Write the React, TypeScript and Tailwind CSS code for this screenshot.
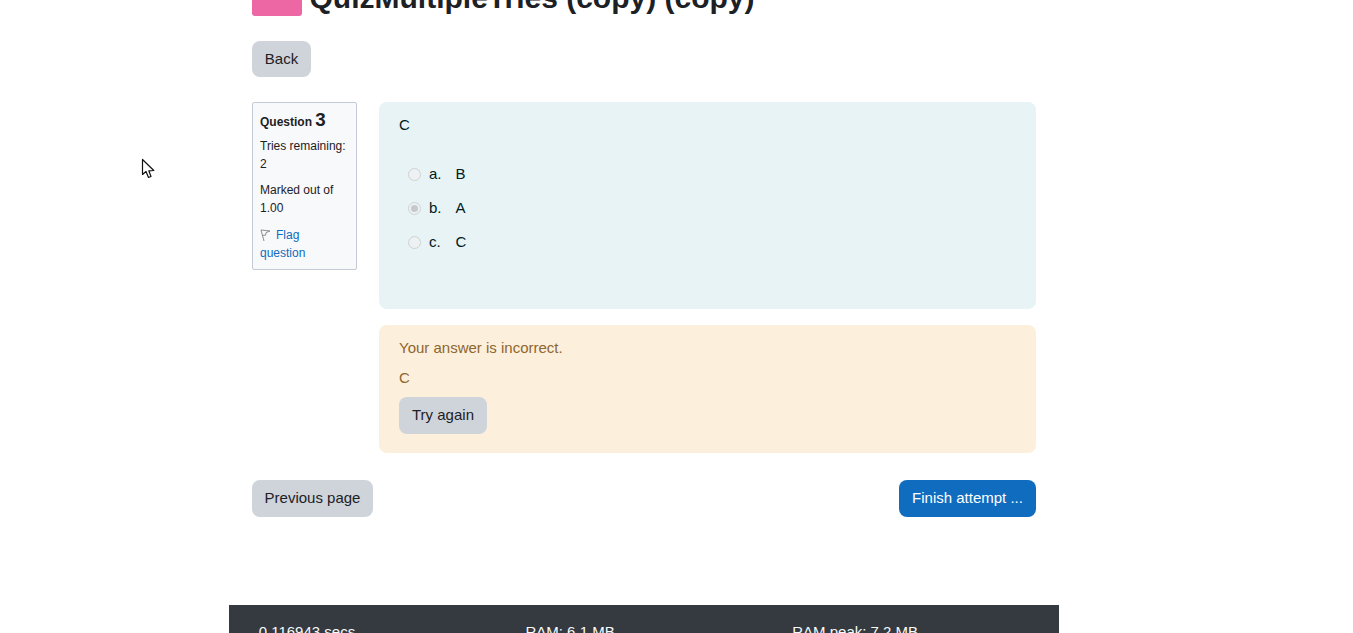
import React from 'react';

function Radio({ checked }: { checked?: boolean }) {
  return (
    <span className="flex h-[13px] w-[13px] shrink-0 items-center justify-center rounded-full border border-[#cfd2d4] bg-[#eef1f2]">
      {checked && <span className="h-[7px] w-[7px] rounded-full bg-[#c6c9cb]" />}
    </span>
  );
}

export default function App() {
  const options = [
    { letter: 'a.', text: 'B' },
    { letter: 'b.', text: 'A', checked: true },
    { letter: 'c.', text: 'C' },
  ];

  return (
    <div className="relative h-[633px] overflow-hidden bg-white font-['Liberation_Sans',Arial,sans-serif] text-[15px] text-[#1d2125]">
      {/* Mouse pointer from the capture */}
      <svg className="absolute left-[141px] top-[158px]" width="15" height="21" viewBox="0 0 15 21">
        <path
          d="M1.5 1.5 L1.5 16.5 L5 13.5 L7.5 19.5 L10 18.5 L7.8 12.8 L12.8 12.5 Z"
          fill="#fff"
          stroke="#111"
          strokeWidth="1.2"
          strokeLinejoin="round"
        />
      </svg>

      <div className="ml-[229px] w-[830px]">
        <main className="px-[23px]">
          {/* Title, scrolled off the top */}
          <div className="-mt-[24px] flex h-[40px] items-center gap-[7.5px]">
            <div className="h-[40px] w-[50px] rounded-[3px] bg-[#ee67a5]" />
            <h1 className="pt-[4px] text-[30px] font-bold leading-[40px] text-[#1d2125]">QuizMultipleTries (copy) (copy)</h1>
          </div>

          <div className="mt-[25px]">
            <button className="h-[36px] w-[59px] rounded-lg bg-[#ced4da] text-[15px] text-[#1d2125]">Back</button>
          </div>

          <div className="mt-[25px] flex items-start gap-[22px]">
            {/* Question info */}
            <div className="h-[168px] w-[105px] shrink-0 rounded-[2px] border border-[#c3cbd6] bg-[#f8f9fa] px-[7px] pt-[6px] text-[12px] leading-[18px]">
              <div className="font-bold leading-[22px]">
                Question <span className="text-[18.75px]">3</span>
              </div>
              <div className="mt-[4px]">Tries remaining: 2</div>
              <div className="mt-[8px]">Marked out of 1.00</div>
              <div className="mt-[9px] w-[80px] text-[#0f6cbf]">
                <svg className="mr-[5px] inline-block align-[-3px]" width="11" height="13" viewBox="0 0 11 13" fill="none">
                  <path d="M1 1 L4 12 M1 1 L10 2 L6 3.6 L5.6 6.2 L2.4 6.4" stroke="#8f8f8f" strokeWidth="1" />
                </svg>
                Flag question
              </div>
            </div>

            <div className="flex min-w-0 flex-1 flex-col gap-4">
              {/* Question content */}
              <div className="h-[207px] rounded-lg bg-[#e7f3f5] px-5 pt-[14px] text-[#001a1e]">
                <p className="leading-[18px]">C</p>
                <div className="mt-[29px] flex flex-col gap-[12px] pl-[8.7px]">
                  {options.map((o) => (
                    <div key={o.letter} className="flex h-[22px] items-center">
                      <Radio checked={o.checked} />
                      <span className="ml-[8.3px] w-[26.5px]">{o.letter}</span>
                      <span>{o.text}</span>
                    </div>
                  ))}
                </div>
              </div>

              {/* Feedback */}
              <div className="h-[128px] rounded-lg bg-[#fcefdc] px-5 pt-[14px] text-[#8e662e]">
                <p className="leading-[18px]">Your answer is incorrect.</p>
                <p className="mt-[12px] leading-[18px]">C</p>
                <div className="mt-[10px]">
                  <button className="h-[37px] w-[88px] rounded-lg bg-[#ced4da] text-[15px] text-[#1d2125]">Try again</button>
                </div>
              </div>
            </div>
          </div>

          <div className="mt-[27px] flex items-center justify-between">
            <button className="h-[37px] w-[121px] rounded-lg bg-[#ced4da] text-[15px] text-[#1d2125]">Previous page</button>
            <button className="h-[37px] w-[137px] rounded-lg bg-[#0f6cbf] text-[15px] text-white">Finish attempt ...</button>
          </div>
        </main>

        <footer className="mt-[88px] grid h-[60px] grid-cols-3 bg-[#343a40] pl-[29.7px] pt-[16px] text-[15px] text-[#f8f9fa]">
          <div>0.116943 secs</div>
          <div>RAM: 6.1 MB</div>
          <div>RAM peak: 7.2 MB</div>
        </footer>
      </div>
    </div>
  );
}
